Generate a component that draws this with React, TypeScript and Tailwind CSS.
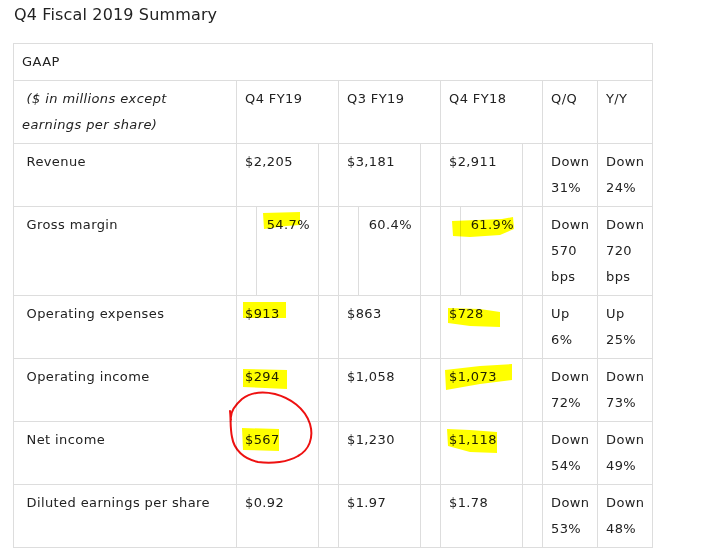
import React from "react";

const font = { fontFamily: '"DejaVu Sans", Verdana, sans-serif' };

const td = "border border-[#dddddd] align-top px-[8px] py-[5px] whitespace-nowrap";

type Row = {
  label: string;
  vals: [string, string, string];
  qq: string[];
  yy: string[];
  right?: boolean;
};

const rows: Row[] = [
  { label: "Revenue", vals: ["$2,205", "$3,181", "$2,911"], qq: ["Down", "31%"], yy: ["Down", "24%"] },
  { label: "Gross margin", vals: ["54.7%", "60.4%", "61.9%"], qq: ["Down", "570", "bps"], yy: ["Down", "720", "bps"], right: true },
  { label: "Operating expenses", vals: ["$913", "$863", "$728"], qq: ["Up", "6%"], yy: ["Up", "25%"] },
  { label: "Operating income", vals: ["$294", "$1,058", "$1,073"], qq: ["Down", "72%"], yy: ["Down", "73%"] },
  { label: "Net income", vals: ["$567", "$1,230", "$1,118"], qq: ["Down", "54%"], yy: ["Down", "49%"] },
  { label: "Diluted earnings per share", vals: ["$0.92", "$1.97", "$1.78"], qq: ["Down", "53%"], yy: ["Down", "48%"] },
];

function Lines({ items }: { items: string[] }) {
  return (
    <>
      {items.map((t, i) => (
        <React.Fragment key={i}>
          {i > 0 && <br />}
          {t}
        </React.Fragment>
      ))}
    </>
  );
}

export default function App() {
  return (
    <div className="relative w-[713px] h-[558px] bg-white text-[#222222] overflow-hidden" style={font}>
      <div className="pl-[14px] pt-[4px] text-[16px] leading-[22px] tracking-[0.15px]">Q4 Fiscal 2019 Summary</div>
      <table className="ml-[13px] mt-[17px] w-[640px] table-fixed border-collapse text-[13px] leading-[26px] tracking-[0.4px]">
        <colgroup>
          <col className="w-[223px]" />
          <col className="w-[20px]" />
          <col className="w-[62px]" />
          <col className="w-[20px]" />
          <col className="w-[20px]" />
          <col className="w-[62px]" />
          <col className="w-[20px]" />
          <col className="w-[20px]" />
          <col className="w-[62px]" />
          <col className="w-[20px]" />
          <col className="w-[55px]" />
          <col className="w-[55px]" />
        </colgroup>
        <tbody>
          <tr>
            <td className={td} colSpan={12}>GAAP</td>
          </tr>
          <tr>
            <td className={td + " italic"}>
              {"\u00a0($ in millions except"}
              <br />
              earnings per share)
            </td>
            <td className={td} colSpan={3}>Q4 FY19</td>
            <td className={td} colSpan={3}>Q3 FY19</td>
            <td className={td} colSpan={3}>Q4 FY18</td>
            <td className={td}>Q/Q</td>
            <td className={td}>Y/Y</td>
          </tr>
          {rows.map((r) => (
            <tr key={r.label}>
              <td className={td}>{"\u00a0" + r.label}</td>
              {r.vals.map((v, i) =>
                r.right ? (
                  <React.Fragment key={i}>
                    <td className={td}></td>
                    <td className={td + " text-right"}>{v}</td>
                    <td className={td}></td>
                  </React.Fragment>
                ) : (
                  <React.Fragment key={i}>
                    <td className={td} colSpan={2}>{v}</td>
                    <td className={td}></td>
                  </React.Fragment>
                )
              )}
              <td className={td + " pr-0"}><Lines items={r.qq} /></td>
              <td className={td + " pr-0"}><Lines items={r.yy} /></td>
            </tr>
          ))}
        </tbody>
      </table>
      <svg
        className="absolute left-0 top-0 pointer-events-none mix-blend-multiply"
        width="713"
        height="558"
        viewBox="0 0 713 558"
      >
        <g fill="#ffff00">
          <polygon points="263,213 300,212 300,225 286,226 264,229" />
          <polygon points="452,221 502,219 513,217 514,229 500,235 470,237 453,236" />
          <polygon points="243,302 286,302 286,318 243,318" />
          <polygon points="448,308 480,309 500,312 500,327 470,326 448,323" />
          <polygon points="243,369 287,370 287,389 243,387" />
          <polygon points="445,370 480,366 512,364 512,380 480,384 446,390" />
          <polygon points="242,428 279,429 279,451 243,450" />
          <polygon points="447,429 470,430 497,432 497,453 470,452 448,446" />
        </g>
        <path
          d="M 231 420 C 230 414, 234 406, 242 399 C 250 393, 262 391, 275 394 C 290 398, 305 408, 310 424 C 314 438, 309 450, 298 456 C 288 462, 272 464, 258 462 C 244 459, 234 450, 232 437 C 230 428, 231 418, 230 411"
          fill="none"
          stroke="#ee1111"
          strokeWidth="2"
          strokeLinecap="round"
          strokeLinejoin="round"
        />
      </svg>
    </div>
  );
}
